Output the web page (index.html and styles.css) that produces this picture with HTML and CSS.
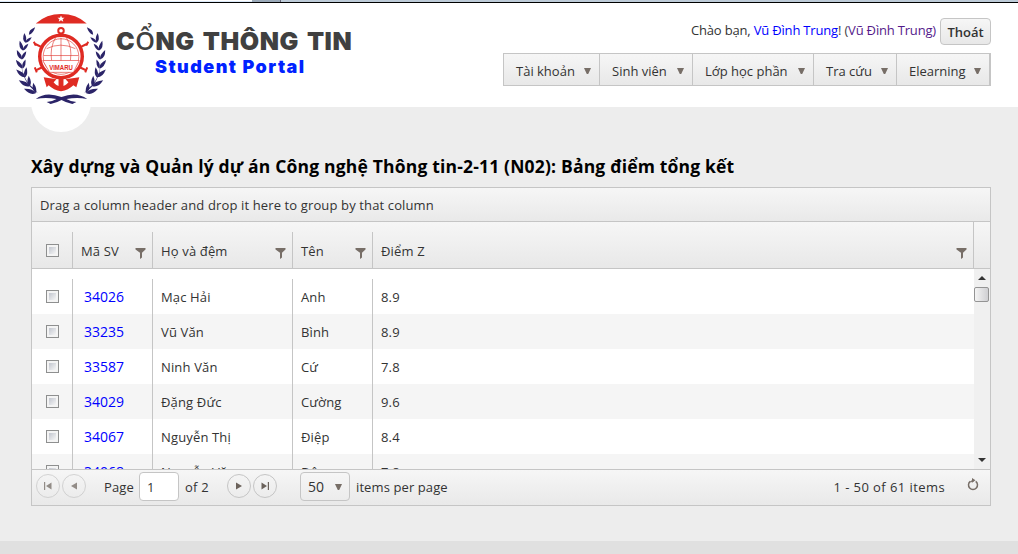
FILE: index.html
```html
<!DOCTYPE html>
<html lang="vi">
<head>
<meta charset="utf-8">
<title>Student Portal</title>
<link rel="stylesheet" href="styles.css">
</head>
<body>
<svg class="defs" width="0" height="0">
  <symbol id="funnel" viewBox="0 0 11 12"><path d="M.5 0H10.500V1.500L7 4.800V9.500L5 11V4.800L.5 1.500Z" fill="#776e67"/></symbol>
  <symbol id="down" viewBox="0 0 7 6"><path d="M0 0H7L4.200 6H2.800Z" fill="#776e67"/></symbol>
</svg>
<div class="topstrip"><span class="tab-a"></span><span class="tab-b"></span></div>
<header class="header">
  <span class="logo-disc"></span>
  <svg class="logo" viewBox="0 0 92 92">
    <path d="M20 9.500Q31 0 45.500 0Q61 0 71.500 9.500Z" fill="#df2b23"/>
    <path d="M45.500 1.500l1 2.300h2.600l-2 1.600.7 2.500-2.300-1.500-2.300 1.500.7-2.500-2-1.600h2.600z" fill="#fff"/>
    <defs>
      <path id="leaf" d="M0 0Q-4 -4 0 -11Q3 -4 0 0Z"/>
      <g id="pair"><use href="#leaf" transform="rotate(-32)"/><use href="#leaf" transform="rotate(24) scale(.85)"/></g>
      <g id="laurel" fill="#2b2468">
        <use href="#pair" transform="translate(20 80) rotate(-38) scale(1.150)"/>
        <use href="#pair" transform="translate(14 73) rotate(-30) scale(1.150)"/>
        <use href="#pair" transform="translate(9.500 64) rotate(-18) scale(1.100)"/>
        <use href="#pair" transform="translate(7 55) rotate(-8)"/>
        <use href="#pair" transform="translate(6 46) rotate(4)"/>
        <use href="#pair" transform="translate(7 37) rotate(14) scale(.95)"/>
        <use href="#pair" transform="translate(9.500 29) rotate(26) scale(.9)"/>
        <use href="#leaf" transform="translate(13 21) rotate(40) scale(.9)"/>
        <path d="M22 80Q6 70 5 48Q7 68 18 75Z"/>
      </g>
    </defs>
    <use href="#laurel"/>
    <use href="#laurel" transform="translate(91 0) scale(-1 1)"/>
    <path d="M20 86Q30 78 46 84Q61 78 72 86Q62 84 51 86Q56 89 61 89L57 91Q51 90 46 87Q41 90 35 91L31 89Q36 89 41 86Q30 84 20 86Z" fill="#2b2468"/>
    <g fill="none" stroke="#df2b23">
      <circle cx="45.500" cy="43" r="21.500" stroke-width="3.500"/>
      <circle cx="45.500" cy="17" r="2.800" stroke-width="2"/>
      <path d="M27 34L19 30M64 34L72 30M26 54L20 57M65 54L71 57" stroke-width="2.200"/>
      <path d="M18 28l2 4M73 28l-2 4M19 54l2 5M72 54l-2 5" stroke-width="2"/>
      <path d="M45.500 64V75" stroke-width="5"/>
      <g stroke-width=".6"><path d="M45.500 24V59M31 35Q45 28 60 35M28 42H63M40 24Q34 34 36 47M51 24Q57 34 55 47"/><circle cx="45.500" cy="43" r="18"/><path d="M27 47H64L58 59H34Z" fill="#fff"/></g>
    </g>
    <path d="M28 64L41 66L38 69Q41 73 45.500 73Q50 73 53 69L50 66L64 64L61 74L58 72Q53 77 45.500 78Q38 77 33 72L31 74Z" fill="#df2b23"/>
    <text x="45.500" y="56.500" text-anchor="middle" class="seal-text" textLength="24" lengthAdjust="spacingAndGlyphs">VIMARU</text>
  </svg>
  <div class="brand">
    <div class="brand-main">C<span class="thin">Ổ</span>NG THÔNG TIN</div>
    <div class="brand-sub">Student Portal</div>
  </div>
  <div class="right">
    <div class="user"><span>Chào bạn, </span><a href="#">Vũ Đình Trung</a><span class="bang">! (</span><span class="visited">Vũ Đình Trung)</span><button class="logout">Thoát</button></div>
    <nav class="menu">
      <a class="m1">Tài khoản<svg><use href="#down"/></svg></a>
      <a class="m2">Sinh viên<svg><use href="#down"/></svg></a>
      <a class="m3">Lớp học phần<svg><use href="#down"/></svg></a>
      <a class="m4">Tra cứu<svg><use href="#down"/></svg></a>
      <a class="m5">Elearning<svg><use href="#down"/></svg></a>
    </nav>
  </div>
</header>
<main class="main">
  <h1 class="title">Xây dựng và Quản lý dự án Công nghệ Thông tin-2-11 (N02): Bảng điểm tổng kết</h1>
  <section class="grid">
    <div class="grouping">Drag a column header and drop it here to group by that column</div>
    <div class="head">
      <div class="row">
        <div class="check"><i class="box"></i></div>
        <div class="cell">Mã SV<svg><use href="#funnel"/></svg></div>
        <div class="cell">Họ và đệm<svg><use href="#funnel"/></svg></div>
        <div class="cell">Tên<svg><use href="#funnel"/></svg></div>
        <div class="cell">Điểm Z<svg><use href="#funnel"/></svg></div>
      </div>
      <div class="head-end"></div>
    </div>
    <div class="body">
      <div class="rows">
        <div class="row"><div class="check"><i class="box"></i></div><a class="cell id">34026</a><div class="cell">Mạc Hải</div><div class="cell">Anh</div><div class="cell">8.9</div></div>
        <div class="row alt"><div class="check"><i class="box"></i></div><a class="cell id">33235</a><div class="cell">Vũ Văn</div><div class="cell">Bình</div><div class="cell">8.9</div></div>
        <div class="row"><div class="check"><i class="box"></i></div><a class="cell id">33587</a><div class="cell">Ninh Văn</div><div class="cell">Cứ</div><div class="cell">7.8</div></div>
        <div class="row alt"><div class="check"><i class="box"></i></div><a class="cell id">34029</a><div class="cell">Đặng Đức</div><div class="cell">Cường</div><div class="cell">9.6</div></div>
        <div class="row"><div class="check"><i class="box"></i></div><a class="cell id">34067</a><div class="cell">Nguyễn Thị</div><div class="cell">Điệp</div><div class="cell">8.4</div></div>
        <div class="row alt"><div class="check"><i class="box"></i></div><a class="cell id">34068</a><div class="cell">Nguyễn Văn</div><div class="cell">Đô</div><div class="cell">7.8</div></div>
      </div>
      <div class="scroll">
        <svg width="8" height="4"><path d="M0 4L4 0L8 4Z" fill="#333"/></svg>
        <span class="thumb"></span>
        <svg class="sdown" width="8" height="4"><path d="M0 0L4 4L8 0Z" fill="#333"/></svg>
      </div>
    </div>
    <div class="pager">
      <span class="round off"><svg width="8" height="8"><path d="M0 0H1.200V8H0ZM7.500 .5V7.500L2 4Z"/></svg></span>
      <span class="round off"><svg width="8" height="8"><path d="M7 .5V7.500L1 4Z"/></svg></span>
      <span class="page-label">Page</span>
      <input class="page-input" value="1">
      <span class="of">of 2</span>
      <span class="round next"><svg width="8" height="8"><path d="M1 .5V7.500L7 4Z"/></svg></span>
      <span class="round"><svg width="8" height="8"><path d="M8 0H6.800V8H8ZM.5 .5V7.500L6 4Z"/></svg></span>
      <span class="size">50<svg><use href="#down"/></svg></span>
      <span class="per">items per page</span>
      <span class="count">1 - 50 of 61 items</span>
      <svg class="refresh" width="12" height="13" viewBox="0 0 12 13"><path d="M3.300 3.300A4.500 4.500 0 1 0 8.700 3.300" fill="none" stroke="#776e67" stroke-width="1.500"/><path d="M3.500 4.200Q4.500 2.500 7 2.600" fill="none" stroke="#776e67" stroke-width="1.400"/><path d="M5 0L8.500 2.300L5 4.800Z" fill="#776e67"/></svg>
    </div>
  </section>
</main>
<footer class="footer"></footer>
</body>
</html>
```
FILE: styles.css
```css
* { box-sizing: border-box; }
body { margin: 0; height: 554px; overflow: hidden; display: flex; flex-direction: column; background: #ededed; color: #333; font: 13px/20px "Open Sans", "Noto Sans", sans-serif; }
.defs { position: absolute; }
.topstrip { height: 3px; flex: none; display: flex; border-bottom: 1px solid #000; background: #edf5fd; }
.tab-a { width: 252px; border-top: 1px solid #fff; border-bottom: 1px solid #dceafa; }
.tab-b { width: 29px; background: #9aa9b8; border-right: 1px solid #667; }
.topstrip::after { content: ""; flex: 1; background: #bdcbd8; }
.header { position: relative; height: 104px; flex: none; background: #fff; display: flex; padding-left: 16px; }
.logo-disc { position: absolute; left: 31px; top: 69px; width: 60px; height: 60px; border-radius: 50%; background: #fff; }
.logo { position: relative; width: 91px; height: 91px; margin-top: 11px; flex: none; }
.seal-text { font: bold 7.5px "Liberation Sans", sans-serif; fill: #df2b23; }
.brand { margin: 21px 0 0 9px; width: 240px; font-family: Inter, sans-serif; font-weight: 900; white-space: nowrap; }
.brand-main { color: #404040; font-size: 25px; line-height: 32px; letter-spacing: .55px; word-spacing: 2.5px; }
.thin { font-family: "Open Sans", sans-serif; font-weight: 600; }
.brand-sub { color: #0022ff; font-size: 18px; line-height: 20px; padding-left: 39px; letter-spacing: 1.45px; }
.right { margin: 15px 27px 0 auto; display: flex; flex-direction: column; align-items: flex-end; }
.user { display: flex; align-items: flex-start; white-space: pre; line-height: 25px; font-size: 13px; letter-spacing: -.18px; }
a { color: #00f; text-decoration: none; }
.visited { color: #551a8b; }
.bang { color: #444; }
.logout { width: 51px; height: 27px; margin-left: 4px; padding: 0; border: 1px solid #c5c5c5; border-radius: 4px; background: linear-gradient(#f6f6f6, #e8e8e8); color: #333; font: 600 13px/27px "Open Sans", sans-serif; }
.menu { display: flex; width: 488px; height: 33px; margin-top: 8px; border: 1px solid #c5c5c5; background: linear-gradient(#f6f6f6, #e8e8e8); }
.menu a { flex: none; display: flex; align-items: center; justify-content: space-between; padding: 3px 8px 0 12px; color: #333; border-right: 1px solid #c5c5c5; white-space: nowrap; }
.menu svg { width: 7px; height: 6px; margin-top: -1px; }
.menu .m1 { width: 96px; } .menu .m2 { width: 93px; } .menu .m3 { width: 121px; } .menu .m4 { width: 83px; } .menu .m5 { width: 93px; }
.main { padding: 48px 27px 0 31px; flex: 1; }
.title { margin: 0; height: 32px; font-size: 17.5px; line-height: 22px; font-weight: 700; color: #000; white-space: nowrap; letter-spacing: .18px; }
.grid { width: 960px; height: 319px; border: 1px solid #c5c5c5; background: #fff; display: flex; flex-direction: column; }
.grouping { height: 34px; padding: 0 8px; line-height: 34px; border-bottom: 1px solid #c5c5c5; background: linear-gradient(#f6f6f6, #e9e9e9); letter-spacing: .13px; }
.head { height: 47px; display: flex; border-bottom: 1px solid #c5c5c5; background: linear-gradient(#f6f6f6, #e8e8e8); }
.row { display: grid; grid-template-columns: 40px 80px 140px 80px 1fr; height: 35px; letter-spacing: .15px; }
.head .row { width: 941px; height: 36px; margin-top: 10px; }
.head-end { width: 1px; background: #c5c5c5; }
.check { display: flex; align-items: center; padding-left: 14px; }
.box { width: 13px; height: 13px; border: 1px solid #8e8f8f; background: linear-gradient(135deg, #c2c6cf, #f6f6f6) content-box, #f4f4f4; padding: 2px; }
.cell { display: flex; align-items: center; justify-content: space-between; border-left: 1px solid #c5c5c5; padding: 0 6px 0 8px; white-space: nowrap; }
.head .cell { padding-top: 2px; }
.head .cell svg { width: 11px; height: 12px; margin-top: 5px; }
.cell.id { padding-left: 11px; font-size: 14px; letter-spacing: 0; }
.body { height: 200px; display: flex; overflow: hidden; }
.rows { width: 942px; padding-top: 10px; }
.alt { background: #f5f5f5; }
.scroll { width: 16px; background: #f0f0f0; display: flex; flex-direction: column; align-items: center; padding: 7px 0; }
.thumb { align-self: flex-start; width: 15px; height: 15px; margin-top: 7px; border: 1px solid #949494; border-radius: 2px; background: linear-gradient(90deg, #f4f4f4, #cfcfd2); }
.sdown { margin-top: auto; }
.pager { height: 36px; display: flex; align-items: center; padding: 0 0 2px 4px; border-top: 1px solid #c5c5c5; background: linear-gradient(#f6f6f6, #e9e9e9); white-space: nowrap; }
.round { width: 24px; height: 24px; margin-right: 2px; margin-top: -1px; border: 1px solid #c5c5c5; border-radius: 50%; display: flex; align-items: center; justify-content: center; flex: none; }
.round path { fill: #6b625b; }
.off { opacity: .7; }
.page-label { width: 35px; margin-left: 16px; letter-spacing: .15px; }
.page-input { width: 40px; height: 29px; border: 1px solid #c5c5c5; border-radius: 4px; padding: 0 7px; font: 13px "Open Sans", sans-serif; color: #333; }
.of { width: 41px; margin-left: 6px; letter-spacing: .2px; }
.next { margin-left: 1px; }
.size { display: flex; align-items: center; justify-content: space-between; width: 50px; height: 29px; margin: 0 6px 0 21px; padding: 0 7px; border: 1px solid #c5c5c5; border-radius: 4px; background: linear-gradient(#f6f6f6, #ececec); font-size: 14px; }
.size svg { width: 7px; height: 6px; }
.per { letter-spacing: .1px; }
.count { margin-left: auto; letter-spacing: .42px; }
.refresh { margin: -5px 11px 0 22px; }
.footer { height: 13px; flex: none; background: #e0e0e0; }
```
